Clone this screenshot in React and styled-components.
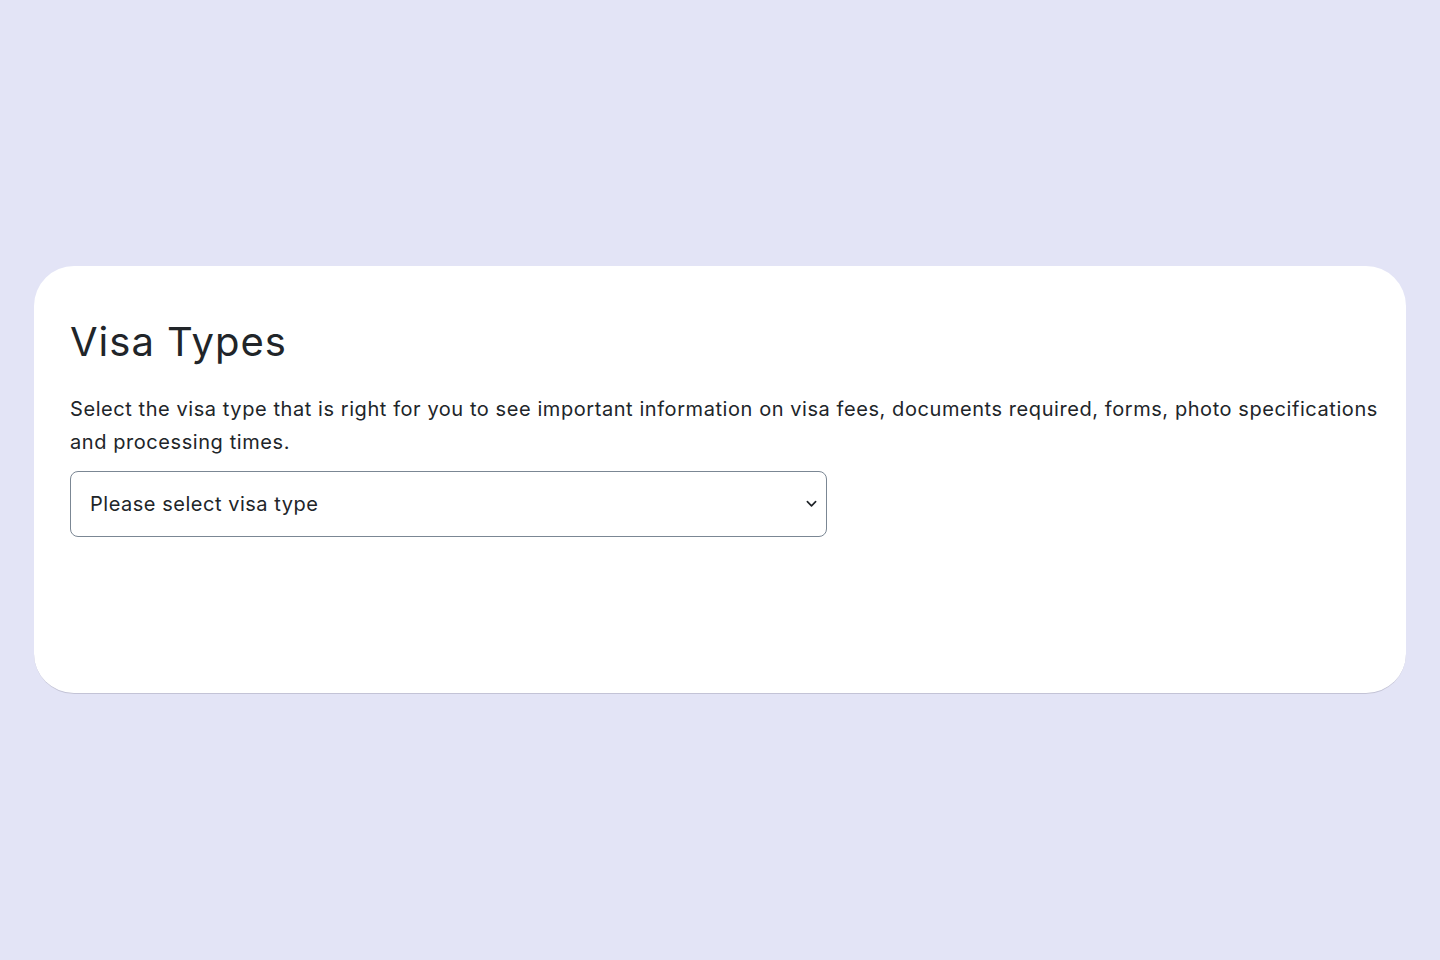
import styled, { createGlobalStyle } from "styled-components";

const GlobalStyle = createGlobalStyle`
  html, body {
    margin: 0;
    padding: 0;
    background: #e3e4f6;
    font-family: Inter, "Noto Sans", sans-serif;
    color: #212529;
  }
`;

export default function App() {
  return (
    <>
      <GlobalStyle />
      <Page>
        <Card>
          <Heading>Visa Types</Heading>
          <Intro>
            Select the visa type that is right for you to see important information on visa fees,
            documents required, forms, photo specifications and processing times.
          </Intro>
          <SelectWrap>
            <VisaSelect defaultValue="">
              <option value="">Please select visa type</option>
              <option value="visitor">Visitor visa</option>
              <option value="student">Student visa</option>
              <option value="work">Work visa</option>
            </VisaSelect>
            <Chevron viewBox="0 0 12 8" aria-hidden="true">
              <path d="M1.5 1.5 6 6l4.5-4.5" fill="none" stroke="#1f2328" strokeWidth="1.8" strokeLinecap="round" strokeLinejoin="round" />
            </Chevron>
          </SelectWrap>
        </Card>
      </Page>
    </>
  );
}

const Page = styled.main`
  min-height: 960px;
  box-sizing: border-box;
  padding: 266px 34px 0;
`;

const Card = styled.section`
  background: #fff;
  border-radius: 40px;
  border-bottom: 1px solid #c3c3d6;
  height: 428px;
  box-sizing: border-box;
  padding: 52px 22px 0 36px;
`;

const Heading = styled.h1`
  margin: 0 0 27px;
  font-size: 40px;
  font-weight: 400;
  line-height: 48px;
  letter-spacing: 1px;
`;

const Intro = styled.p`
  margin: 0 0 12px;
  font-size: 20px;
  line-height: 33px;
  letter-spacing: 0.57px;
`;

const SelectWrap = styled.div`
  position: relative;
  width: 757px;
`;

const VisaSelect = styled.select`
  appearance: none;
  display: block;
  width: 100%;
  height: 66px;
  box-sizing: border-box;
  padding: 0 48px 0 19px;
  border: 1.5px solid #7b8794;
  border-radius: 8px;
  background: #fff;
  font-family: inherit;
  font-size: 20px;
  letter-spacing: 0.52px;
  color: #212529;
`;

const Chevron = styled.svg`
  position: absolute;
  right: 10px;
  top: 29px;
  width: 11px;
  height: 8px;
  pointer-events: none;
`;
